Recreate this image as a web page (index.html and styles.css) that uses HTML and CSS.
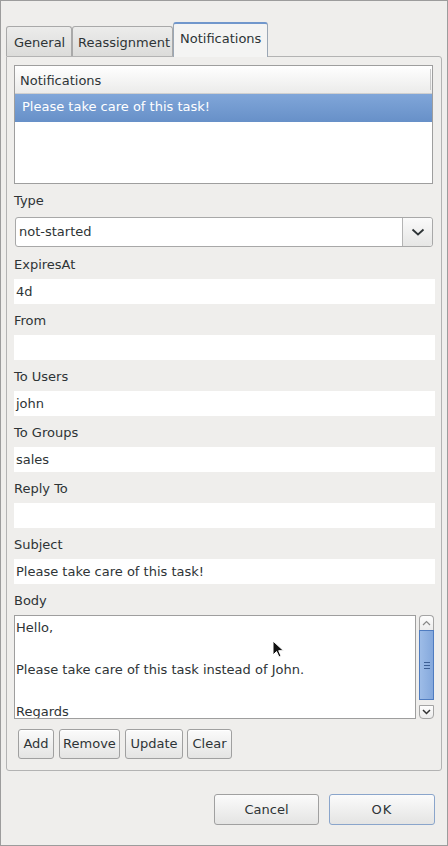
FILE: index.html
```html
<!DOCTYPE html>
<html>
<head>
<meta charset="utf-8">
<link rel="stylesheet" href="styles.css">
</head>
<body>
<div class="window">
  <div class="tabbar">
    <div class="tab tab-general">General</div>
    <div class="tab tab-reassign">Reassignment</div>
    <div class="tab tab-active">Notifications</div>
  </div>
  <div class="pane">
    <div class="table">
      <div class="thead"><span>Notifications</span><i class="sep"></i></div>
      <div class="row selected">Please take care of this task!</div>
    </div>
    <div class="label first">Type</div>
    <div class="combo">
      <div class="combo-text">not-started</div>
      <div class="combo-btn">
        <svg width="14" height="8" viewBox="0 0 14 8"><path d="M1.5 1.5 L7 6.5 L12.5 1.5" fill="none" stroke="#2e3436" stroke-width="1.8"/></svg>
      </div>
    </div>
    <div class="label">ExpiresAt</div>
    <div class="field">4d</div>
    <div class="label">From</div>
    <div class="field"></div>
    <div class="label">To Users</div>
    <div class="field">john</div>
    <div class="label">To Groups</div>
    <div class="field">sales</div>
    <div class="label">Reply To</div>
    <div class="field"></div>
    <div class="label">Subject</div>
    <div class="field">Please take care of this task!</div>
    <div class="label">Body</div>
    <div class="body-area">
      <div class="textarea">
        <div class="line">Hello,</div>
        <div class="line">&nbsp;</div>
        <div class="line">Please take care of this task instead of John.</div>
        <div class="line">&nbsp;</div>
        <div class="line">Regards</div>
        <svg class="cursor" width="14" height="20" viewBox="0 0 14 20"><path d="M1 1 L1 15 L4.5 11.5 L7 17 L9 16 L6.7 10.7 L11.5 10.7 Z" fill="#111" stroke="#fff" stroke-width="1"/></svg>
      </div>
      <div class="scrollbar">
        <div class="sb-btn sb-up"><svg width="9" height="6" viewBox="0 0 9 6"><path d="M1 5 L4.5 1.5 L8 5" fill="none" stroke="#888" stroke-width="1.2"/></svg></div>
        <div class="sb-thumb"><span class="grip"></span></div>
        <div class="sb-btn sb-down"><svg width="9" height="6" viewBox="0 0 9 6"><path d="M1 1 L4.5 4.5 L8 1" fill="none" stroke="#333" stroke-width="1.5"/></svg></div>
      </div>
    </div>
    <div class="actions">
      <div class="btn b-add">Add</div>
      <div class="btn b-remove">Remove</div>
      <div class="btn b-update">Update</div>
      <div class="btn b-clear">Clear</div>
    </div>
  </div>
  <div class="dialog-buttons">
    <div class="dbtn">Cancel</div>
    <div class="dbtn ok">OK</div>
  </div>
</div>
</body>
</html>
```
FILE: styles.css
```css
* { box-sizing: border-box; }
html, body { margin: 0; padding: 0; }
body {
  width: 448px; height: 846px;
  font-family: "DejaVu Sans", sans-serif;
  font-size: 13px;
  color: #2e3436;
  background: #efeeec;
}
.window {
  width: 448px; height: 846px;
  border: 1px solid #9c9c9c;
  background: #efeeec;
  padding: 21px 0 0 5px;
}
.tabbar {
  display: flex;
  align-items: flex-end;
  height: 34px;
  position: relative;
  z-index: 2;
}
.tab {
  height: 30px;
  border: 1px solid #a9a9a9;
  border-bottom: none;
  border-radius: 3px 3px 0 0;
  background: linear-gradient(#ececeb, #dcdcda);
  padding: 8px 0 0 7px;
  line-height: 16px;
  color: #2e3436;
}
.tab-general { width: 66px; }
.tab-reassign { width: 101px; padding-left: 5px; }
.tab-active {
  width: 95px;
  height: 35px;
  background: #f4f4f3;
  border-color: #9ba7b5;
  border-top: 2px solid #7197cc;
  padding: 7px 0 0 6px;
  margin-bottom: -1px;
}
.pane {
  width: 436px;
  height: 715px;
  border: 1px solid #b3b3b3;
  border-radius: 0 3px 3px 3px;
  padding: 8px 6px 0 7px;
  position: relative;
}
.table {
  height: 119px;
  width: 419px;
  border: 1px solid #9e9e9e;
  background: #fff;
}
.thead {
  height: 28px;
  background: linear-gradient(#ffffff, #ebebea);
  border-bottom: 1px solid #cfcfcf;
  padding: 7px 0 0 5px;
  line-height: 16px;
  position: relative;
}
.thead .sep {
  position: absolute; right: 1px; top: 3px; bottom: 3px;
  width: 1px; background: #c8c8c8;
}
.row.selected {
  height: 28px;
  background: linear-gradient(#80a6d9, #6790c8);
  color: #fff;
  padding: 5px 0 0 7px;
  line-height: 16px;
}
.label {
  height: 31px;
  padding: 9px 0 0 0;
  line-height: 16px;
}
.label.first { height: 33px; }
.combo {
  width: 418px;
  height: 30px;
  margin-left: 1px;
  margin-bottom: 1px;
  display: flex;
  border: 1px solid #a8a8a8;
  border-radius: 3px;
  background: #fff;
}
.combo-text {
  flex: 1;
  padding: 6px 0 0 3px;
  line-height: 16px;
}
.combo-btn {
  width: 30px;
  border-left: 1px solid #b4b4b4;
  background: linear-gradient(#fafafa, #e6e6e5);
  border-radius: 0 3px 3px 0;
  display: flex; align-items: center; justify-content: center;
}
.field {
  width: 421px;
  height: 25px;
  background: #fff;
  padding: 5px 0 0 2px;
  line-height: 16px;
}
.body-area {
  display: flex;
  height: 104px;
}
.textarea {
  width: 402px;
  height: 104px;
  border: 1px solid #9e9e9e;
  background: #fff;
  padding: 1px 0 0 1px;
  overflow: hidden;
  position: relative;
}
.textarea .line { line-height: 21px; height: 21px; }
.cursor { position: absolute; left: 257px; top: 24px; }
.scrollbar {
  margin-left: 3px;
  width: 15px;
  height: 104px;
  display: flex;
  flex-direction: column;
}
.sb-btn {
  height: 15px;
  border: 1px solid #a4a4a4;
  background: linear-gradient(#fdfdfd, #ececec);
  display: flex; align-items: center; justify-content: center;
}
.sb-up { border-radius: 4px 4px 0 0; border-bottom: none; height: 15px; }
.sb-down { border-radius: 0 0 4px 4px; margin-top: 5px; height: 14px; }
.sb-thumb {
  height: 70px;
  border: 1px solid #4f7cc0;
  background: linear-gradient(90deg, #9dbce7, #84a8dc);
  display: flex; align-items: center; justify-content: center;
}
.grip {
  width: 6px; height: 7px;
  border-top: 1px solid #3d5f94;
  border-bottom: 1px solid #3d5f94;
  position: relative;
}
.grip::after {
  content: ""; position: absolute; left: 0; right: 0; top: 2px;
  border-top: 1px solid #3d5f94;
}
.actions {
  display: flex;
  gap: 5px;
  margin: 10px 0 0 4px;
}
.btn {
  height: 30px;
  border: 1px solid #a0a0a0;
  border-radius: 3px;
  background: linear-gradient(#fbfbfb, #e4e4e3);
  line-height: 28px;
  text-align: center;
  box-shadow: inset 0 1px 0 #fff;
}
.b-add { width: 36px; }
.b-remove { width: 61px; }
.b-update { width: 58px; }
.b-clear { width: 45px; margin-left: -1px; }
.dialog-buttons {
  display: flex;
  justify-content: flex-end;
  gap: 10px;
  margin-top: 23px;
  padding-right: 12px;
}
.dbtn {
  width: 105px;
  height: 31px;
  border: 1px solid #a0a0a0;
  border-radius: 3px;
  background: linear-gradient(#fbfbfb, #e4e4e3);
  text-align: center;
  line-height: 29px;
}
.dbtn.ok {
  width: 106px;
  border-color: #8aa5cb;
  letter-spacing: 1px;
}
```
